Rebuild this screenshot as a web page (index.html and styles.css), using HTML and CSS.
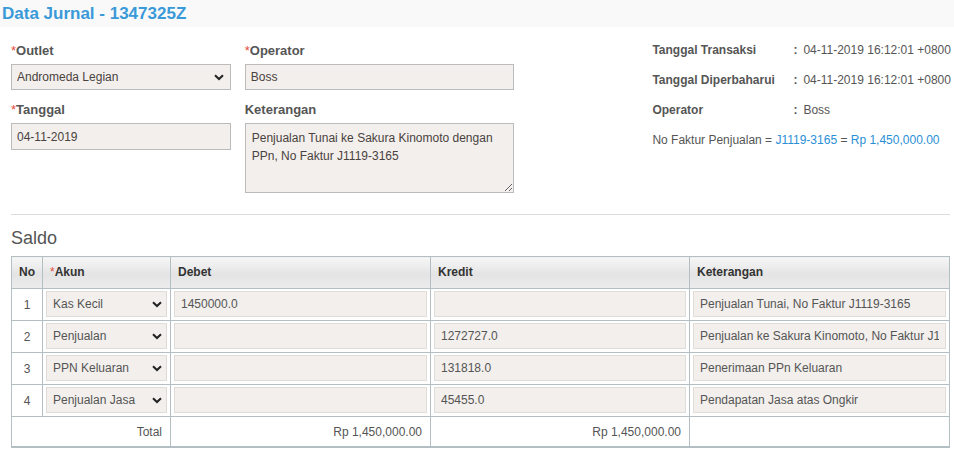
FILE: index.html
```html
<!DOCTYPE html>
<html lang="id">
<head>
    <meta charset="UTF-8">
    <meta name="viewport" content="width=device-width, initial-scale=1.0">
    <title>Data Jurnal - 1347325Z</title>
    <link rel="stylesheet" href="styles.css">
</head>
<body>
    <div class="page-header">
        <h1>Data Jurnal - 1347325Z</h1>
    </div>

    <div class="top">
        <div class="col col-left">
            <div class="field">
                <label><span class="req">*</span>Outlet</label>
                <div class="select-wrap">
                    <select class="ctrl">
                        <option>Andromeda Legian</option>
                    </select>
                    <svg class="chev" width="10" height="7" viewBox="0 0 10 7"><path d="M1 1.2 L5 5 L9 1.2" fill="none" stroke="#222" stroke-width="2"/></svg>
                </div>
            </div>
            <div class="field">
                <label><span class="req">*</span>Tanggal</label>
                <input class="ctrl tall" type="text" value="04-11-2019">
            </div>
        </div>

        <div class="col col-mid">
            <div class="field">
                <label><span class="req">*</span>Operator</label>
                <input class="ctrl" type="text" value="Boss">
            </div>
            <div class="field">
                <label>Keterangan</label>
                <textarea class="ctrl area">Penjualan Tunai ke Sakura Kinomoto dengan PPn, No Faktur J1119-3165</textarea>
            </div>
        </div>

        <div class="info">
            <div class="info-row"><span class="info-label">Tanggal Transaksi</span><span class="colon">:</span><span>04-11-2019 16:12:01 +0800</span></div>
            <div class="info-row"><span class="info-label">Tanggal Diperbaharui</span><span class="colon">:</span><span>04-11-2019 16:12:01 +0800</span></div>
            <div class="info-row"><span class="info-label">Operator</span><span class="colon">:</span><span>Boss</span></div>
            <div class="info-row faktur">No Faktur Penjualan = <span class="link">J1119-3165</span> = <span class="link">Rp 1,450,000.00</span></div>
        </div>
    </div>

    <hr class="sep">

    <h2 class="saldo">Saldo</h2>

    <div class="table-wrap">
        <table class="jurnal">
            <colgroup>
                <col style="width:31px">
                <col style="width:128px">
                <col style="width:260px">
                <col style="width:259px">
                <col>
            </colgroup>
            <thead>
                <tr>
                    <th class="no">No</th>
                    <th><span class="req">*</span>Akun</th>
                    <th>Debet</th>
                    <th>Kredit</th>
                    <th>Keterangan</th>
                </tr>
            </thead>
            <tbody>
                <tr>
                    <td class="no">1</td>
                    <td><div class="select-wrap"><select class="cell-ctrl"><option>Kas Kecil</option></select><svg class="chev small" width="10" height="7" viewBox="0 0 10 7"><path d="M1 1.2 L5 5 L9 1.2" fill="none" stroke="#222" stroke-width="2"/></svg></div></td>
                    <td><input class="cell-ctrl" type="text" value="1450000.0"></td>
                    <td><input class="cell-ctrl" type="text" value=""></td>
                    <td><input class="cell-ctrl" type="text" value="Penjualan Tunai, No Faktur J1119-3165"></td>
                </tr>
                <tr>
                    <td class="no">2</td>
                    <td><div class="select-wrap"><select class="cell-ctrl"><option>Penjualan</option></select><svg class="chev small" width="10" height="7" viewBox="0 0 10 7"><path d="M1 1.2 L5 5 L9 1.2" fill="none" stroke="#222" stroke-width="2"/></svg></div></td>
                    <td><input class="cell-ctrl" type="text" value=""></td>
                    <td><input class="cell-ctrl" type="text" value="1272727.0"></td>
                    <td><input class="cell-ctrl" type="text" value="Penjualan ke Sakura Kinomoto, No Faktur J1119-3165"></td>
                </tr>
                <tr>
                    <td class="no">3</td>
                    <td><div class="select-wrap"><select class="cell-ctrl"><option>PPN Keluaran</option></select><svg class="chev small" width="10" height="7" viewBox="0 0 10 7"><path d="M1 1.2 L5 5 L9 1.2" fill="none" stroke="#222" stroke-width="2"/></svg></div></td>
                    <td><input class="cell-ctrl" type="text" value=""></td>
                    <td><input class="cell-ctrl" type="text" value="131818.0"></td>
                    <td><input class="cell-ctrl" type="text" value="Penerimaan PPn Keluaran"></td>
                </tr>
                <tr>
                    <td class="no">4</td>
                    <td><div class="select-wrap"><select class="cell-ctrl"><option>Penjualan Jasa</option></select><svg class="chev small" width="10" height="7" viewBox="0 0 10 7"><path d="M1 1.2 L5 5 L9 1.2" fill="none" stroke="#222" stroke-width="2"/></svg></div></td>
                    <td><input class="cell-ctrl" type="text" value=""></td>
                    <td><input class="cell-ctrl" type="text" value="45455.0"></td>
                    <td><input class="cell-ctrl" type="text" value="Pendapatan Jasa atas Ongkir"></td>
                </tr>
            </tbody>
            <tfoot>
                <tr>
                    <td colspan="2" class="num">Total</td>
                    <td class="num">Rp 1,450,000.00</td>
                    <td class="num">Rp 1,450,000.00</td>
                    <td></td>
                </tr>
            </tfoot>
        </table>
    </div>
</body>
</html>
```

FILE: styles.css
```css
body { margin: 0; font-family: "Liberation Sans", Arial, sans-serif; color: #555; background-color: #fff; }

.page-header { height: 27px; background-color: #f9f9f9; padding: 0 2px; }
.page-header h1 { margin: 0; font-size: 17px; line-height: 27px; font-weight: bold; color: #3a99d8; }

.req { color: #e74c3c; font-weight: normal; }

/* bagian atas: form + info */
.top { display: flex; padding: 8px 0 0 11px; }
.col { padding-top: 8px; }
.col-left { width: 220px; }
.col-mid { width: 270px; margin-left: 14px; }
.field { margin-bottom: 12px; }
.field:last-child { margin-bottom: 0; }
.field label { display: block; font-size: 13px; line-height: 15px; font-weight: bold; color: #555; margin-bottom: 6px; }

.ctrl { display: block; box-sizing: border-box; width: 100%; height: 26px; margin: 0; padding: 0 5px; border: 1px solid #bbb; border-radius: 0; background-color: #f2efec; font-family: inherit; font-size: 12px; color: #4a4240; outline: none; }
.ctrl.tall { height: 27px; }
select.ctrl, select.cell-ctrl { -webkit-appearance: none; appearance: none; }
.area { height: 70px; padding: 5px 6px; line-height: 18px; resize: vertical; }

.select-wrap { position: relative; }
.chev { position: absolute; right: 7px; top: 50%; margin-top: -3px; pointer-events: none; }
.chev.small { right: 5px; }

.info { margin-left: 138px; width: 302px; font-size: 12px; color: #555; }
.info-row { height: 30px; line-height: 30px; white-space: nowrap; }
.info-label { display: inline-block; width: 141px; font-weight: bold; }
.colon { display: inline-block; width: 10px; font-weight: bold; }
.faktur { font-weight: normal; }
.link { color: #2b8fd6; }

.sep { margin: 21px 4px 0 11px; border: none; border-top: 1px solid #ddd; height: 0; }

.saldo { margin: 13px 0 7px 11px; font-size: 18px; line-height: 21px; font-weight: normal; color: #555; }

/* tabel saldo */
.table-wrap { padding: 0 4px 0 11px; }
.jurnal { width: 100%; table-layout: fixed; border-collapse: collapse; font-size: 12px; }
.jurnal th, .jurnal td { border: 1px solid #b3bfc3; }
.jurnal th { padding: 8px 7px; line-height: 15px; text-align: left; font-weight: bold; color: #333; background: linear-gradient(#f6f6f6, #e4e4e4 55%, #ececec); }
.jurnal th.no { text-align: center; padding: 8px 0; }
.jurnal tbody td { padding: 2px 3px 3px 3px; height: 26px; }
.jurnal td.no { text-align: center; color: #555; padding: 0; }
.jurnal tfoot td { padding: 8px 8px 7px 8px; line-height: 14px; color: #555; }
.jurnal tfoot tr td { border-bottom: 2px solid #b3bfc3; }
.jurnal .num { text-align: right; }

.cell-ctrl { display: block; box-sizing: border-box; width: 100%; height: 26px; margin: 0; padding: 0 6px; border: 1px solid #e0dcd8; border-radius: 0; background-color: #f2efec; font-family: inherit; font-size: 12px; color: #555; outline: none; }
```
